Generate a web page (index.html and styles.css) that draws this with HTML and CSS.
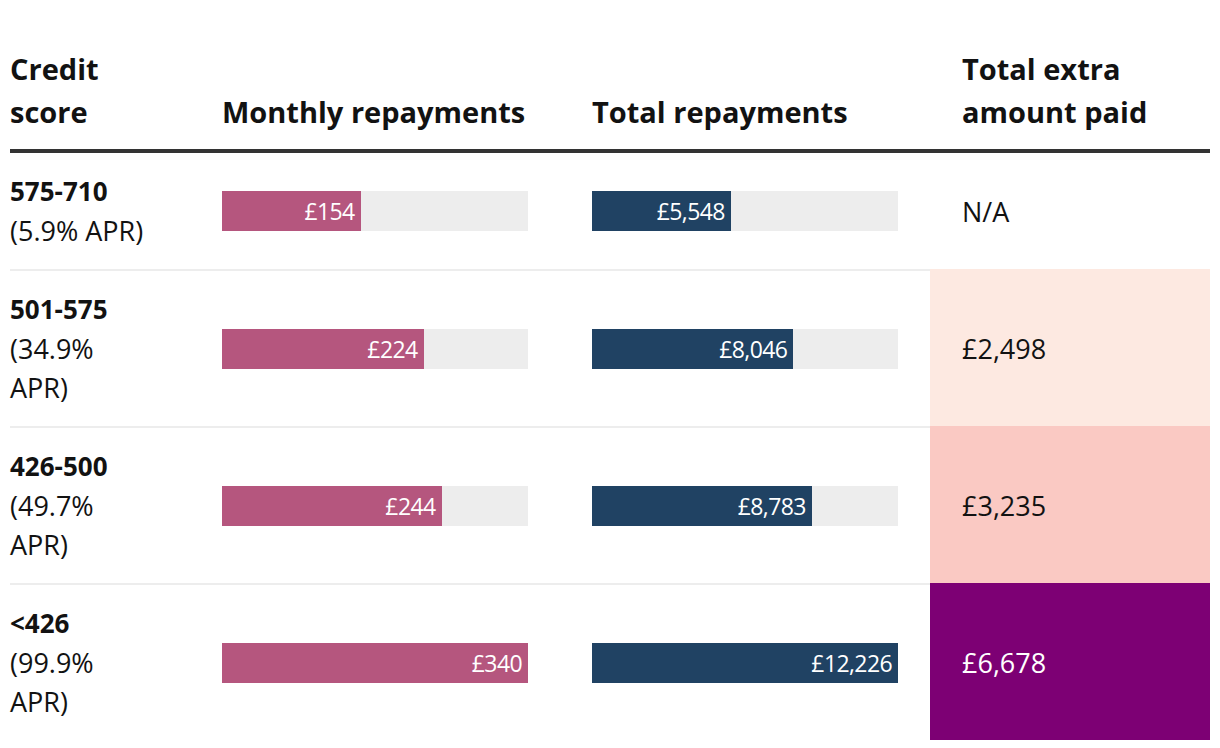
FILE: index.html
```html
<!DOCTYPE html>
<html lang="en">
<head>
<meta charset="utf-8">
<title>Credit score repayments</title>
<link rel="stylesheet" href="styles.css">
</head>
<body>
<div class="table">
  <div class="head">
    <div class="hcell">Credit score</div>
    <div class="hcell">Monthly repayments</div>
    <div class="hcell">Total repayments</div>
    <div class="hcell pad">Total extra amount paid</div>
  </div>

  <div class="row">
    <div class="cell label"><span class="score">575-710</span><span class="apr">(5.9% APR)</span></div>
    <div class="cell"><div class="track"><div class="fill pink" style="width:45.3%">£154</div></div></div>
    <div class="cell"><div class="track"><div class="fill blue" style="width:45.38%">£5,548</div></div></div>
    <div class="cell extra">N/A</div>
  </div>

  <div class="row">
    <div class="cell label"><span class="score">501-575</span><span class="apr">(34.9%<br>APR)</span></div>
    <div class="cell"><div class="track"><div class="fill pink" style="width:65.88%">£224</div></div></div>
    <div class="cell"><div class="track"><div class="fill blue" style="width:65.81%">£8,046</div></div></div>
    <div class="cell extra lvl1">£2,498</div>
  </div>

  <div class="row">
    <div class="cell label"><span class="score">426-500</span><span class="apr">(49.7%<br>APR)</span></div>
    <div class="cell"><div class="track"><div class="fill pink" style="width:71.76%">£244</div></div></div>
    <div class="cell"><div class="track"><div class="fill blue" style="width:71.84%">£8,783</div></div></div>
    <div class="cell extra lvl2">£3,235</div>
  </div>

  <div class="row">
    <div class="cell label"><span class="score">&lt;426</span><span class="apr">(99.9%<br>APR)</span></div>
    <div class="cell"><div class="track"><div class="fill pink" style="width:100%">£340</div></div></div>
    <div class="cell"><div class="track"><div class="fill blue" style="width:100%">£12,226</div></div></div>
    <div class="cell extra lvl3">£6,678</div>
  </div>
</div>
</body>
</html>
```

FILE: styles.css
```css
html, body {
  margin: 0;
  padding: 0;
  background: #fff;
}

body {
  font-family: "Open Sans", "Noto Sans", sans-serif;
  color: #121212;
}

.table {
  margin: 0 10px;
  width: 1200px;
}

.head,
.row {
  display: grid;
  grid-template-columns: 212px 370px 338px 280px;
}

.head {
  padding-top: 47px;
  padding-bottom: 16px;
  border-bottom: 4px solid #333;
  align-items: end;
}

.hcell {
  font-size: 29px;
  font-weight: 700;
  line-height: 43px;
}

.hcell:first-child {
  width: 120px;
}

.hcell.pad {
  padding-left: 32px;
  width: 220px;
}

.row .cell {
  border-top: 2px solid #ededed;
  display: flex;
  align-items: center;
  font-size: 27px;
  line-height: 39px;
}

.head + .row .cell {
  border-top: 0;
}

.cell.label {
  padding: 19px 0;
  display: block;
}

.score {
  display: block;
  height: 39px;
  font-weight: 700;
  font-size: 26px;
  line-height: 39px;
}

.apr {
  display: block;
  line-height: 39px;
}

.track {
  width: 306px;
  height: 40px;
  background: #ededed;
  display: flex;
}

.fill {
  height: 40px;
  color: #fff;
  font-size: 23px;
  letter-spacing: -0.6px;
  line-height: 40px;
  text-align: right;
  padding-right: 6px;
  box-sizing: border-box;
  white-space: nowrap;
}

.pink { background: #b5567e; }
.blue { background: #204263; }

.extra {
  padding-left: 32px;
}

.row .cell.lvl1 {
  background: #fde9e1;
  border-top-color: transparent;
}

.row .cell.lvl2 {
  background: #fac9c3;
  border-top-color: transparent;
}

.row .cell.lvl3 {
  background: #7d0074;
  border-top-color: transparent;
  color: #fff;
}
```
